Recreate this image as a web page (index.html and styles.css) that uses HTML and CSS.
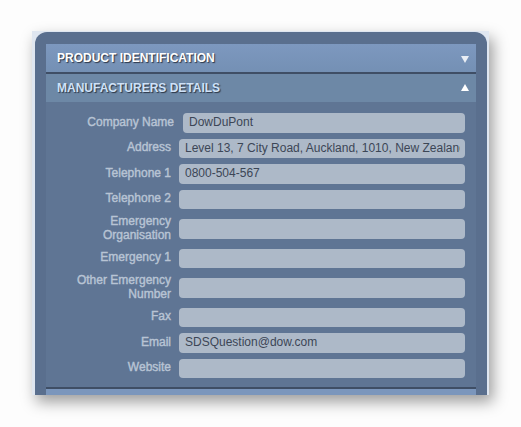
FILE: index.html
```html
<!DOCTYPE html>
<html lang="en">
<head>
<meta charset="utf-8">
<title>Manufacturers Details</title>
<link rel="stylesheet" href="styles.css">
</head>
<body>
<div class="frame">
  <div class="panel">
    <div class="section-head section-head--closed">
      <span class="section-title">PRODUCT IDENTIFICATION</span>
      <span class="tri tri--down"></span>
    </div>
    <div class="section-head section-head--open">
      <span class="section-title">MANUFACTURERS DETAILS</span>
      <span class="tri tri--up"></span>
    </div>
    <div class="form">
      <div class="row row--wide"><div class="label">Company Name</div><div class="field"><span class="value">DowDuPont</span></div></div>
      <div class="row"><div class="label">Address</div><div class="field"><span class="value">Level 13, 7 City Road, Auckland, 1010, New Zealand</span></div></div>
      <div class="row"><div class="label">Telephone 1</div><div class="field"><span class="value">0800-504-567</span></div></div>
      <div class="row"><div class="label">Telephone 2</div><div class="field"></div></div>
      <div class="row"><div class="label">Emergency Organisation</div><div class="field"></div></div>
      <div class="row"><div class="label">Emergency 1</div><div class="field"></div></div>
      <div class="row"><div class="label">Other Emergency Number</div><div class="field"></div></div>
      <div class="row"><div class="label">Fax</div><div class="field"></div></div>
      <div class="row"><div class="label">Email</div><div class="field"><span class="value">SDSQuestion@dow.com</span></div></div>
      <div class="row"><div class="label">Website</div><div class="field"></div></div>
    </div>
    <div class="section-head section-head--next"></div>
  </div>
</div>
</body>
</html>
```

FILE: styles.css
```css
html, body {
  margin: 0;
  padding: 0;
  background: #fdfdfd;
  font-family: "Liberation Sans", Arial, sans-serif;
}

body {
  padding: 31px 0 0 32px;
  height: 427px;
  box-sizing: border-box;
  overflow: hidden;
}

.frame {
  width: 457px;
  height: 364px;
  background: #dfe6f0;
  box-shadow: 4px 7px 14px rgba(0, 0, 0, 0.38);
  overflow: hidden;
}

.panel {
  margin: 1px 0 0 3px;
  width: 452px;
  height: 363px;
  box-sizing: border-box;
  padding: 12px 11px 0;
  background: #5a6f8e;
  border-radius: 12px 12px 0 0;
  overflow: hidden;
}

.section-head {
  height: 28px;
  display: flex;
  align-items: center;
  justify-content: space-between;
  padding: 0 7px 0 11px;
  box-sizing: border-box;
}

.section-head--closed {
  background: linear-gradient(#7d98bf, #7490b4);
  border-bottom: 2px solid #3f4e65;
  height: 30px;
}

.section-head--open {
  background: #6d88a6;
}

.section-head--next {
  border-top: 2px solid #3f4e65;
  background: #7b96bc;
  height: 12px;
}

.section-title {
  font-size: 12px;
  font-weight: bold;
  text-shadow: 1px 1px 1px rgba(30, 38, 52, 0.85);
}

.section-head--closed .section-title {
  color: #ffffff;
}

.section-head--open .section-title {
  color: #cfe2f8;
}

.tri {
  width: 0;
  height: 0;
  border-left: 4px solid transparent;
  border-right: 4px solid transparent;
}

.tri--down {
  border-top: 7px solid #e9eef5;
  margin-top: 2px;
}

.tri--up {
  border-bottom: 7px solid #ffffff;
  margin-top: -2px;
}

.form {
  background: #5f7594;
  padding: 8px 11px 6px 0;
}

.row {
  display: flex;
  align-items: center;
  padding: 3px 0;
  min-height: 19.5px;
}

.label {
  flex: 0 0 125px;
  box-sizing: border-box;
  padding-left: 25px;
  margin-right: 8px;
  text-align: right;
  font-size: 12px;
  line-height: 13.75px;
  color: #b8c4d4;
  -webkit-text-stroke: 0.4px #b8c4d4;
}

.row--wide .label {
  flex-basis: 128px;
  margin-right: 9px;
}

.field {
  flex: 1 1 auto;
  min-width: 0;
  height: 19.5px;
  box-sizing: border-box;
  padding: 0 5px 0 6px;
  background: #adb9c8;
  border-radius: 4px;
}

.value {
  display: block;
  line-height: 19.5px;
  font-size: 12px;
  color: #3c4656;
  white-space: nowrap;
  overflow: hidden;
}
```
